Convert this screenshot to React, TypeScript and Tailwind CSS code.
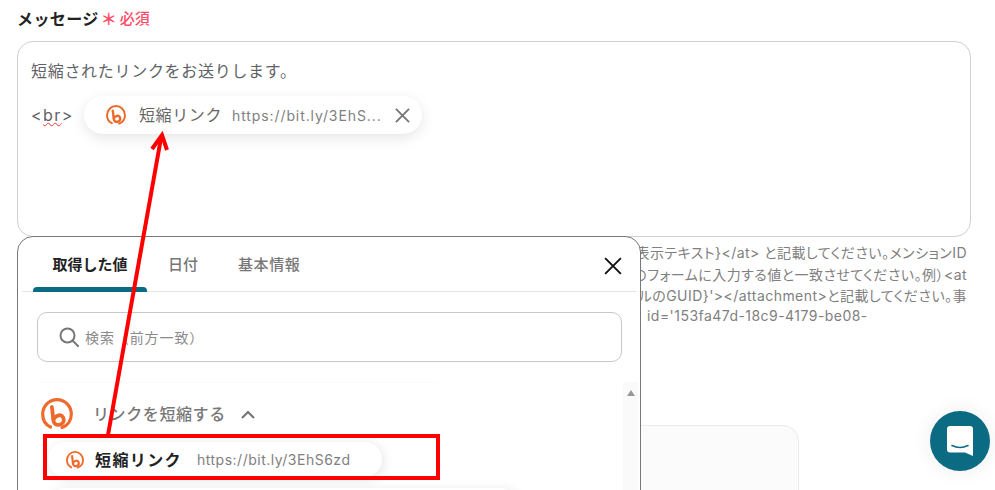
const font = { fontFamily: 'Inter, "Noto Sans CJK JP", sans-serif' };

const BitlyLogo = ({ className }: { className: string }) => (
	<svg viewBox="0 0 32 32" className={className} fill="none" stroke="#ee6a2c" strokeLinecap="round" strokeLinejoin="round">
		<path d="M9.5 29C4.5 26.7 1.7 21.8 1.7 16.2C1.7 8.2 8 1.7 16 1.7S30.3 8.2 30.3 16.2C30.3 22.5 26.5 27.6 21 29.5" strokeWidth="3.2" />
		<path d="M10.8 9C11.8 14 11.8 18 12.2 21.8C12.6 25.6 15.2 27.3 18.2 26.8C21.3 26.3 23 24 22.7 21.2C22.4 18.4 20 16.8 17.6 17.3C15.2 17.8 13.6 19.4 12.4 21.5" strokeWidth="3.8" />
	</svg>
);

const X = ({ className, color, width }: { className: string; color: string; width: number }) => (
	<svg viewBox="0 0 16 16" className={className} fill="none" stroke={color} strokeWidth={width}>
		<path d="M1 1L15 15M15 1L1 15" />
	</svg>
);

export default function App() {
	return (
		<div style={font} className="relative h-[490px] w-[995px] overflow-hidden bg-white text-[#333]">
			<div className="px-[17px] pt-[8px]">
				<div className="flex h-[22px] items-center">
					<span className="text-[16px] font-bold leading-[22px] tracking-[0.4px] text-[#222]">メッセージ</span>
					<span className="ml-[2px] text-[16px] font-bold leading-[22px] text-[#ff4d67]">＊</span>
					<span className="ml-[3px] text-[15px] font-medium leading-[22px] text-[#ff4d67]">必須</span>
				</div>

				<div className="mt-[11px] h-[196px] w-[954px] rounded-[16px] border border-[#cfd0d4] px-[13px] pt-[16px]">
					<p className="text-[16px] leading-[26px] tracking-[0.7px] text-[#5f6368]">短縮されたリンクをお送りします。</p>
					<div className="mt-[12px] flex items-center">
						<span className="w-[41px] text-[16px] leading-[26px] tracking-[1.4px] text-[#5f6368]">
							&lt;<span className="underline decoration-[#e33] decoration-wavy decoration-1">br</span>&gt;
						</span>
						<div className="ml-[12px] flex h-[38px] w-[338px] items-center rounded-full bg-white pl-[22px] shadow-[0_4px_14px_rgba(0,0,0,0.1)]">
							<BitlyLogo className="h-[20px] w-[20px]" />
							<span className="ml-[13px] text-[16px] tracking-[0.6px] text-[#666]">短縮リンク</span>
							<span className="ml-[10px] text-[14px] tracking-[0.9px] text-[#808080]">https://bit.ly/3EhS...</span>
							<X className="ml-[13px] h-[15px] w-[15px]" color="#777" width={2} />
						</div>
					</div>
				</div>

				<div className="mt-[5px] w-[950px] text-[14px] leading-[21.5px] tracking-[0.46px] text-[#808080] [font-feature-settings:'palt']">
					<p className="overflow-hidden whitespace-nowrap text-right">{"{表示テキスト}</at> と記載してください。メンションID"}</p>
					<p className="overflow-hidden whitespace-nowrap text-right">のフォームに入力する値と一致させてください。例）&lt;at</p>
					<p className="overflow-hidden whitespace-nowrap text-right">{"ファイルのGUID}'></attachment>と記載してください。事"}</p>
					<p className="-mt-[2px] overflow-hidden whitespace-nowrap pl-[630px]">id='153fa47d-18c9-4179-be08-</p>
				</div>

				<div className="mt-[99px] ml-[400px] h-[200px] w-[382px] rounded-[16px] border border-[#ebebeb] bg-[#fbfbfb]" />
			</div>

			{/* 値の選択パネル */}
			<div className="absolute left-[17px] top-[236px] h-[300px] w-[624px] rounded-t-[16px] border border-[#77787c] bg-white">
				<div className="relative mx-[4px] flex h-[55px] items-center border-b border-[#e4e4e4] pt-[3px]">
					<div className="ml-[11px] flex w-[114px] justify-center text-[15px] font-semibold text-[#222]">取得した値</div>
					<div className="ml-[21px] text-[15px] font-medium text-[#777]">日付</div>
					<div className="ml-[40px] text-[15px] font-medium tracking-[0.6px] text-[#777]">基本情報</div>
					<div className="absolute bottom-[-1px] left-[11px] h-[5px] w-[114px] rounded-t-[4px] bg-[#0b6b82]" />
					<X className="absolute right-[14px] top-[20px] h-[18px] w-[18px]" color="#111" width={1.7} />
				</div>

				<div className="mx-[19px] mt-[20px] flex h-[50px] w-[585px] items-center rounded-[10px] border border-[#c8c8c8] pl-[21px]">
					<svg viewBox="0 0 20 20" className="h-[20px] w-[20px]" fill="none" stroke="#777" strokeWidth="2">
						<circle cx="8.5" cy="8.5" r="7" />
						<path d="M13.5 13.5L19 19" strokeLinecap="round" />
					</svg>
					<span className="ml-[6px] text-[14px] tracking-[0.9px] text-[#8a8a8a]">検索（前方一致）</span>
				</div>

				<div className="mx-[19px] mt-[20px] h-px w-[400px] bg-[#fbfbfb]" />

				<div className="mt-[15px] flex h-[32px] items-center pl-[23px]">
					<BitlyLogo className="h-[32px] w-[32px]" />
					<span className="ml-[20px] text-[16px] font-medium tracking-[0.6px] text-[#777]">リンクを短縮する</span>
					<svg viewBox="0 0 14 9" className="ml-[15px] h-[9px] w-[14px]" fill="none" stroke="#777" strokeWidth="2.2">
						<path d="M1 8L7 2L13 8" />
					</svg>
				</div>

				<div className="ml-[30px] mt-[12px] flex h-[35px] w-[334px] items-center rounded-full bg-white pl-[18px] shadow-[2px_2px_12px_rgba(0,0,0,0.1)]">
					<BitlyLogo className="h-[18px] w-[18px]" />
					<span className="ml-[11px] text-[16px] font-bold tracking-[1.4px] text-[#222]">短縮リンク</span>
					<span className="ml-[15px] text-[14px] tracking-[0.5px] text-[#808080]">https://bit.ly/3EhS6zd</span>
				</div>
				<div className="ml-[30px] mt-[11px] h-[35px] w-[470px] rounded-full bg-white shadow-[2px_2px_12px_rgba(0,0,0,0.1)]" />

				<div className="absolute right-[2px] top-[145px] flex h-[160px] w-[15px] justify-center bg-[#fafafa] pt-[8px]">
					<div className="h-0 w-0 border-x-[4.5px] border-b-[6px] border-x-transparent border-b-[#999]" />
				</div>
			</div>

			{/* 注釈の矢印と枠 */}
			<svg className="pointer-events-none absolute left-0 top-0 h-[490px] w-[995px]" viewBox="0 0 995 490" fill="none" stroke="#f00">
				<path d="M108 435L161 138" strokeWidth="4" />
				<path d="M152 149L162 135L167 150" strokeWidth="4" />
			</svg>
			<div className="pointer-events-none absolute left-[43px] top-[434px] h-[46px] w-[397px] border-[4px] border-[#f00]" />

			<button className="absolute left-[930px] top-[411px] flex h-[60px] w-[60px] items-center justify-center rounded-full bg-[#0b6b82] shadow-[0_0_20px_rgba(0,0,0,0.08)]">
				<svg viewBox="0 0 26 30" className="h-[30px] w-[26px]">
					<path d="M3 0H23A3 3 0 0 1 26 3V30L18 26.5H3A3 3 0 0 1 0 23.5V3A3 3 0 0 1 3 0Z" fill="#fff" />
					<path d="M5 19.5C10 22 16 22 21 19.5" fill="none" stroke="#0b6b82" strokeWidth="1.6" strokeLinecap="round" />
				</svg>
			</button>
		</div>
	);
}
